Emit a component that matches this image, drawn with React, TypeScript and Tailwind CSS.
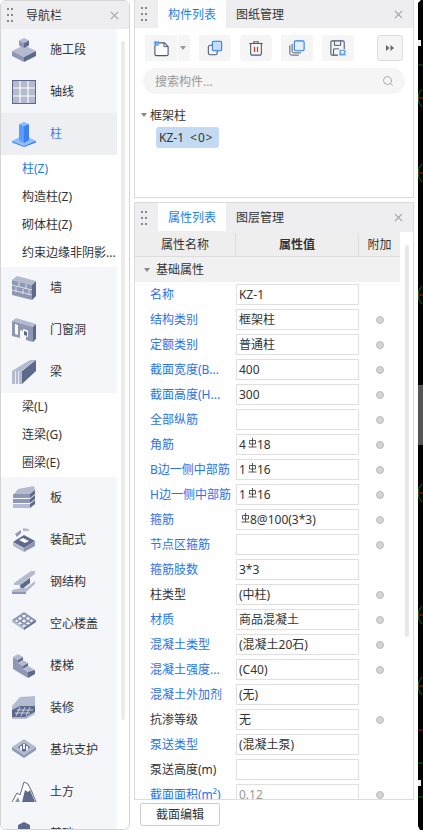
import type { ReactNode } from 'react';
import { Search, X } from 'lucide-react';

const L = '#b4bbcf';
const M = '#8e98b4';
const D = '#5d6a8e';

const icons: Record<string, ReactNode> = {
  stage: (
    <>
      <polygon points="12,7 24,13 12,19 0,13" fill={L} />
      <polygon points="0,13 12,19 12,24 0,18" fill={M} />
      <polygon points="24,13 12,19 12,24 24,18" fill={D} />
      <polygon points="12,0 17,2.5 12,5 7,2.5" fill={L} />
      <polygon points="7,2.5 12,5 12,10 7,7.5" fill={M} />
      <polygon points="17,2.5 12,5 12,10 17,7.5" fill={D} />
    </>
  ),
  axis: (
    <>
      <rect x="0.5" y="0.5" width="23" height="23" fill={L} stroke={D} />
      <path d="M8 1v22M16 1v22M1 8h22M1 16h22" stroke="#fff" strokeWidth="1.2" />
    </>
  ),
  column: (
    <>
      <polygon points="12,13 24,19 12,24 0,19" fill="#8fbcff" />
      <polygon points="0,19 12,24 12,25 0,20.5" fill="#3f86f0" />
      <polygon points="24,19 12,24 12,25 24,20.5" fill="#2f74e0" />
      <polygon points="7,2 12,0 17,2 12,4" fill="#8fbcff" />
      <polygon points="7,2 12,4 12,21 7,18" fill="#5b9dff" />
      <polygon points="17,2 12,4 12,21 17,18" fill="#3b82f0" />
    </>
  ),
  wall: (
    <>
      <polygon points="0,4 5,0 24,5 20,9" fill={L} />
      <polygon points="0,4 20,9 20,24 0,19" fill={M} />
      <polygon points="24,5 20,9 20,24 24,20" fill={D} />
      <path d="M0 9l20 5M0 14l20 5M7 6v5M14 8v5M4 11v5M11 13v5M17 14v5" stroke="#e4e7ef" strokeWidth="0.9" />
    </>
  ),
  door: (
    <>
      <polygon points="0,3 4,0 24,6 21,9" fill={L} />
      <path d="M0 3l21 6v15L14 22V14L8 12v8l-8-2z" fill={M} />
      <polygon points="24,6 21,9 21,24 24,21" fill={D} />
      <polygon points="3,6 6,7 6,17 3,16" fill="#fff" />
      <polygon points="11,11 16,12.5 16,19 11,17.5" fill="#fff" />
      <polygon points="12,13 15,14 15,18 12,17" fill={D} />
    </>
  ),
  beam: (
    <>
      <polygon points="0,11 18,0 24,0 9,11" fill={L} />
      <polygon points="0,11 10,11 10,24 0,24" fill={L} />
      <polygon points="10,11 24,0 24,11 10,24" fill={D} />
      <path d="M3.5 11v13M6.5 11v13" stroke="#fff" strokeWidth="0.7" />
    </>
  ),
  slab: (
    <>
      <polygon points="6,3 22,0 23,4 18,8 2,8" fill={L} />
      <polygon points="1,8 18,8 18,12 1,12" fill={M} />
      <polygon points="1,13 18,13 18,17 1,17" fill={M} />
      <polygon points="1,18 18,18 18,22 1,22" fill={L} />
      <polygon points="18,8 23,4 23,8 18,12" fill={D} />
      <polygon points="18,13 23,9 23,13 18,17" fill={D} />
      <polygon points="18,18 23,14 23,18 18,22" fill={D} />
    </>
  ),
  prefab: (
    <>
      <polygon points="3,6 9,2 9,5 5,9" fill={M} />
      <polygon points="11,0 17,1 17,3 11,3" fill={L} />
      <polygon points="1,14 12,7 23,13 12,20" fill={D} />
      <polygon points="1,14 12,20 12,24 1,18" fill={L} />
      <polygon points="23,13 12,20 12,24 23,18" fill={M} />
      <polygon points="7,12 11,10 17,13 13,15" fill="#fff" />
    </>
  ),
  steel: (
    <>
      <polygon points="8,15 18,8 18,13 9,20" fill={D} />
      <polygon points="2,13 19,1 23,1 23,4 8,15 2,15" fill={L} />
      <polygon points="0,20 9,18 14,18 23,11 23,14 14,22 14,24 0,24" fill={L} />
      <polygon points="0,22 14,22 14,24 0,24" fill={M} />
    </>
  ),
  hollow: (
    <>
      <polygon points="12,0 24,8 12,16 0,8" fill={M} />
      <polygon points="0,8 12,16 12,18 0,10" fill={L} />
      <polygon points="24,8 12,16 12,18 24,10" fill={D} />
      <g fill="#fff">
        <polygon points="12,2.5 14,4 12,5.5 10,4" />
        <polygon points="8,5 10,6.5 8,8 6,6.5" />
        <polygon points="16,5 18,6.5 16,8 14,6.5" />
        <polygon points="4.5,7.5 6.5,9 4.5,10 3,8.5" />
        <polygon points="12,7.5 14,9 12,10.5 10,9" />
        <polygon points="19.5,7.5 21,8.5 19.5,10 17.5,9" />
        <polygon points="8,10 10,11.5 8,12.5 6,11.5" />
        <polygon points="16,10 18,11.5 16,12.5 14,11.5" />
        <polygon points="12,12.5 14,13.5 12,15 10,14" />
      </g>
    </>
  ),
  stair: (
    <>
      <polygon points="1,3 6,6 6,9 11,12 11,15 16,18 16,24 1,15" fill={M} />
      <polygon points="1,3 6,0 11,3 6,6" fill={L} />
      <polygon points="6,6 11,3 11,6 6,9" fill={D} />
      <polygon points="6,9 11,6 16,9 11,12" fill={L} />
      <polygon points="11,12 16,9 16,12 11,15" fill={D} />
      <polygon points="11,15 16,12 23,16 16,18" fill={L} />
      <polygon points="16,18 23,16 23,20 16,24" fill={D} />
    </>
  ),
  finish: (
    <>
      <polygon points="0,10 8,1 23,0 23,13 8,13 0,22" fill={L} />
      <polygon points="0,14 8,10 23,10 23,16 14,21 0,21" fill={D} />
      <polygon points="0,21 14,21 23,16 23,18 14,23 0,23" fill={L} />
      <path d="M5 14h16M3 17h15M8 11l-4 9M13 11l-4 9M18 11l-4 9" stroke="#dfe3ec" strokeWidth="0.8" />
    </>
  ),
  pit: (
    <>
      <polygon points="12,1 24,9 12,17 0,9" fill={L} />
      <polygon points="0,9 12,17 12,20 0,12" fill={M} />
      <polygon points="24,9 12,17 12,20 24,12" fill={M} />
      <polygon points="12,5 18,9 12,14 6,9" fill={D} />
      <path d="M9 8v4M12 6v5M15 8v4" stroke="#eef0f5" strokeWidth="2" />
    </>
  ),
  earth: (
    <>
      <path d="M0 22L5 13L8 15L12 2L16 4L20 12L24 22" fill="#fff" stroke={D} strokeWidth="1" />
      <polygon points="10,22 13,10 16,12 18,10 23,22" fill={D} />
      <polygon points="3,22 6,17 8,22" fill={M} />
    </>
  ),
  base: <polygon points="12,0 18,3 18,8 12,11 6,8 6,3" fill={D} />,
};

function NavIcon({ name }: { name: string }) {
  return (
    <svg width="24" height="24" viewBox="0 0 24 24" className="shrink-0 overflow-visible">
      {icons[name]}
    </svg>
  );
}

function Grip() {
  return (
    <div className="grid w-[6px] grid-cols-2 gap-x-[2px] gap-y-[4px]">
      {[0, 1, 2, 3, 4, 5].map((i) => (
        <span key={i} className="h-[2px] w-[2px] bg-[#888]" />
      ))}
    </div>
  );
}

function NavRow({ icon, label, active }: { icon: string; label: string; active?: boolean }) {
  return (
    <div className={`flex h-[42px] items-center gap-[14px] pl-[11px] ${active ? 'bg-[#eeeff3] text-[#3f7fe6]' : 'text-[#333]'}`}>
      <NavIcon name={icon} />
      <span>{label}</span>
    </div>
  );
}

function SubRow({ label, active }: { label: string; active?: boolean }) {
  return (
    <div className={`flex h-[28px] items-center pl-[21px] ${active ? 'text-[#1a7fe8]' : 'text-[#333]'}`}>
      <span className="truncate">{label}</span>
    </div>
  );
}

function Nav() {
  return (
    <aside className="flex h-[830px] w-[130px] shrink-0 flex-col overflow-hidden rounded-[6px] border border-[#d4d4d4] bg-white">
      <div className="flex h-[28px] shrink-0 items-center bg-[#eeeef0] pl-[6px] pr-[8px] text-[#333]">
        <Grip />
        <span className="ml-[13px] flex-1 pt-[1px]">导航栏</span>
        <X size={13} className="text-[#aaa]" />
      </div>
      <div className="flex">
        <div className="w-[116px] shrink-0 bg-[#f5f6f9]">
          <NavRow icon="stage" label="施工段" />
          <NavRow icon="axis" label="轴线" />
          <NavRow icon="column" label="柱" active />
          <div className="bg-white">
            <SubRow label="柱(Z)" active />
            <SubRow label="构造柱(Z)" />
            <SubRow label="砌体柱(Z)" />
            <SubRow label="约束边缘非阴影..." />
          </div>
          <NavRow icon="wall" label="墙" />
          <NavRow icon="door" label="门窗洞" />
          <NavRow icon="beam" label="梁" />
          <div className="bg-white">
            <SubRow label="梁(L)" />
            <SubRow label="连梁(G)" />
            <SubRow label="圈梁(E)" />
          </div>
          <NavRow icon="slab" label="板" />
          <NavRow icon="prefab" label="装配式" />
          <NavRow icon="steel" label="钢结构" />
          <NavRow icon="hollow" label="空心楼盖" />
          <NavRow icon="stair" label="楼梯" />
          <NavRow icon="finish" label="装修" />
          <NavRow icon="pit" label="基坑支护" />
          <NavRow icon="earth" label="土方" />
          <NavRow icon="base" label="基础" />
        </div>
        <div className="ml-[4px] mt-[12px] h-[679px] w-[4px] rounded-full bg-[#ececec]" />
      </div>
    </aside>
  );
}

function PanelHeader({ active, other, className }: { active: string; other: string; className: string }) {
  return (
    <div className={`flex shrink-0 bg-[#eeeef0] pl-[6px] pr-[8px] ${className}`}>
      <div className="flex w-[17px] items-center">
        <Grip />
      </div>
      <div className="flex h-[28px] w-[68px] items-center justify-center bg-white pt-[1px] text-[#1a7fe8]">{active}</div>
      <div className="flex h-[28px] w-[68px] items-center justify-center pt-[1px] text-[#333]">{other}</div>
      <div className="flex flex-1 items-center justify-end">
        <X size={13} className="text-[#aaa]" />
      </div>
    </div>
  );
}

function ToolButton({ children }: { children: ReactNode }) {
  return <div className="flex h-[26px] w-[32px] items-center justify-center rounded-[3px] bg-[#f5f5f5]">{children}</div>;
}

const stroke = '#4b5670';

function Toolbar() {
  return (
    <div className="flex h-[26px] items-center pl-[10px] pr-[10px]">
      <div className="flex h-[26px] w-[45px] items-center rounded-[3px] bg-[#f5f5f5]">
        <div className="flex h-full w-[33px] items-center justify-center border-r border-[#fff]">
          <svg width="17" height="17" viewBox="0 0 18 18">
            <path d="M6 3h6l4 4v8a1.5 1.5 0 0 1-1.5 1.5h-11A1.5 1.5 0 0 1 2 15V6" fill="#fff" stroke={stroke} strokeWidth="1.2" />
            <path d="M11.5 3v4H16" fill="none" stroke={stroke} strokeWidth="1" />
            <rect x="1" y="1" width="5" height="5" fill="#3f8cf0" />
            <path d="M1 1h1.5v1.5H1zM3.5 3.5H5V5H3.5zM3.5 1H5v1H3.5zM1 3.5h1V5H1z" fill="#cfe2fb" />
          </svg>
        </div>
        <span className="ml-[2px] h-0 w-0 border-x-[3px] border-t-[4px] border-x-transparent border-t-[#999]" />
      </div>
      <div className="ml-[9px]">
        <ToolButton>
          <svg width="16" height="16" viewBox="0 0 18 18">
            <rect x="1.5" y="6" width="10" height="10.5" rx="2" fill="none" stroke={stroke} strokeWidth="1.2" />
            <rect x="6" y="1.5" width="10.5" height="10.5" rx="1.5" fill="#c6dcf8" stroke="#2a7de1" strokeWidth="1.2" />
          </svg>
        </ToolButton>
      </div>
      <div className="ml-[9px]">
        <ToolButton>
          <svg width="16" height="16" viewBox="0 0 18 18">
            <path d="M1.5 4h15M6.5 4V2h5v2M3 4v11.5a1.5 1.5 0 0 0 1.5 1.5h9a1.5 1.5 0 0 0 1.5-1.5V4" fill="none" stroke={stroke} strokeWidth="1.2" />
            <path d="M7.3 7.5v6M10.7 7.5v6" stroke="#e02b2b" strokeWidth="1.3" />
          </svg>
        </ToolButton>
      </div>
      <div className="ml-[9px]">
        <ToolButton>
          <svg width="16" height="16" viewBox="0 0 18 18">
            <path d="M1 6v9a2 2 0 0 0 2 2h8" fill="none" stroke={stroke} strokeWidth="1.1" />
            <path d="M3.5 4.5v8a2 2 0 0 0 2 2h8" fill="none" stroke={stroke} strokeWidth="1.1" />
            <rect x="6" y="1" width="11" height="11" rx="1.5" fill="#e3effd" stroke="#2a7de1" strokeWidth="1.2" />
          </svg>
        </ToolButton>
      </div>
      <div className="ml-[9px]">
        <ToolButton>
          <svg width="16" height="16" viewBox="0 0 18 18">
            <path d="M9 17H2.5A1.5 1.5 0 0 1 1 15.5v-13A1.5 1.5 0 0 1 2.5 1h12A1.5 1.5 0 0 1 16 2.5V10" fill="none" stroke={stroke} strokeWidth="1.2" />
            <path d="M5 1v5h7V1M4 17v-7h6" fill="none" stroke={stroke} strokeWidth="1.1" />
            <rect x="10.5" y="11" width="7" height="6.5" fill="#6aa6f0" />
            <rect x="12.5" y="12.5" width="3" height="2.5" fill="#fff" />
          </svg>
        </ToolButton>
      </div>
      <div className="ml-auto flex h-[26px] w-[26px] items-center justify-center rounded-[3px] border border-[#ddd] bg-[#f5f5f5]">
        <svg width="8" height="6" viewBox="0 0 8 6">
          <path d="M0 0l3.5 3L0 6zM4.5 0L8 3 4.5 6z" fill="#666" />
        </svg>
      </div>
    </div>
  );
}

function ComponentPanel() {
  return (
    <section className="flex h-[198px] shrink-0 flex-col border-x border-b border-[#dcdcdc] bg-white">
      <PanelHeader active="构件列表" other="图纸管理" className="h-[28px]" />
      <div className="pt-[7px]">
        <Toolbar />
      </div>
      <div className="mx-[8px] mt-[7px] flex h-[26px] items-center justify-between rounded-full bg-[#f5f5f5] pl-[12px] pr-[11px] text-[#999]">
        <span className="pt-[1px]">搜索构件...</span>
        <Search size={12} className="text-[#aaa]" />
      </div>
      <div className="mt-[12px] flex h-[18px] items-center pl-[6px] text-[#333]">
        <span className="h-0 w-0 border-x-[3px] border-t-[4px] border-x-transparent border-t-[#888]" />
        <span className="ml-[3px] pt-[1px]">框架柱</span>
      </div>
      <div className="ml-[21px] mt-[3px] flex h-[21px] w-[63px] items-center rounded-[3px] bg-[#c3daf2] pl-[3px] pt-[1px] text-[#333]">
        <span>KZ-1</span>
        <span className="ml-[6px] tracking-[1px]">&lt;0&gt;</span>
      </div>
    </section>
  );
}

function Rebar() {
  return (
    <svg width="9" height="10" viewBox="0 0 9 10" className="mb-[4px] ml-[2px] shrink-0">
      <path d="M4.5 0v9M1.5 2.5h6v3.5h-6zM0.5 9h8" fill="none" stroke="#444" strokeWidth="0.9" />
    </svg>
  );
}

type Prop = { name: string; value: ReactNode; blue?: boolean; dot?: boolean; muted?: boolean };

const props: Prop[] = [
  { name: '名称', value: 'KZ-1', blue: true },
  { name: '结构类别', value: '框架柱', blue: true, dot: true },
  { name: '定额类别', value: '普通柱', blue: true, dot: true },
  { name: '截面宽度(B...', value: '400', blue: true, dot: true },
  { name: '截面高度(H...', value: '300', blue: true, dot: true },
  { name: '全部纵筋', value: '', blue: true, dot: true },
  { name: '角筋', value: <>4<Rebar />18</>, blue: true, dot: true },
  { name: 'B边一侧中部筋', value: <>1<Rebar />16</>, blue: true, dot: true },
  { name: 'H边一侧中部筋', value: <>1<Rebar />16</>, blue: true, dot: true },
  { name: '箍筋', value: <><Rebar />8@100(3*3)</>, blue: true, dot: true },
  { name: '节点区箍筋', value: '', blue: true, dot: true },
  { name: '箍筋肢数', value: '3*3', blue: true },
  { name: '柱类型', value: '(中柱)', dot: true },
  { name: '材质', value: '商品混凝土', blue: true, dot: true },
  { name: '混凝土类型', value: '(混凝土20石)', blue: true, dot: true },
  { name: '混凝土强度...', value: '(C40)', blue: true, dot: true },
  { name: '混凝土外加剂', value: '(无)', blue: true },
  { name: '抗渗等级', value: '无', dot: true },
  { name: '泵送类型', value: '(混凝土泵)', blue: true },
  { name: '泵送高度(m)', value: '' },
  { name: '截面面积(m²)', value: '0.12', blue: true, dot: true, muted: true },
];

function PropRow({ name, value, blue, dot, muted }: Prop) {
  return (
    <div className="flex h-[25px] shrink-0 items-center">
      <div className={`w-[101px] shrink-0 whitespace-nowrap pl-[15px] pt-[1px] ${blue ? 'text-[#2a72ea]' : 'text-[#333]'}`}>{name}</div>
      <div className={`flex h-[21px] w-[123px] shrink-0 items-center whitespace-pre border border-[#e0e0e0] bg-white pl-[2px] pt-[1px] ${muted ? 'text-[#999]' : 'text-[#333]'}`}>
        {value}
      </div>
      <div className="flex flex-1 justify-center">
        {dot && <span className="h-[8px] w-[8px] rounded-full border border-[#bbb] bg-[#d4d4d4]" />}
      </div>
    </div>
  );
}

function PropertyPanel() {
  return (
    <section className="flex h-[598px] shrink-0 flex-col overflow-hidden border border-[#dcdcdc] bg-white">
      <PanelHeader active="属性列表" other="图层管理" className="h-[29px]" />
      <div className="flex min-h-0 flex-1">
        <div className="w-[265px] shrink-0">
          <div className="flex h-[25px] items-center border-b border-[#dcdcdc] bg-[#eeeeee] pt-[2px] text-[#333]">
            <div className="flex h-full w-[101px] items-center justify-center border-r border-[#dcdcdc]">属性名称</div>
            <div className="flex h-full w-[123px] items-center justify-center border-r border-[#dcdcdc] font-bold">属性值</div>
            <div className="flex-1 text-center">附加</div>
          </div>
          <div className="flex h-[25px] items-center bg-[#f1f1f1] pl-[9px] text-[#333]">
            <span className="h-0 w-0 border-x-[3px] border-t-[4px] border-x-transparent border-t-[#888]" />
            <span className="ml-[6px]">基础属性</span>
          </div>
          {props.map((p) => (
            <PropRow key={p.name} {...p} />
          ))}
        </div>
        <div className="ml-[5px] mt-[13px] h-[392px] w-[4px] rounded-full bg-[#e8e8e8]" />
      </div>
    </section>
  );
}

function CadStrip() {
  const red = [98, 173, 295, 493, 615, 686];
  return (
    <div className="h-[830px] w-[5px] shrink-0">
      <svg width="5" height="830" viewBox="0 0 5 830" className="block">
        <path d="M0 3L3 0H5V830H2L0 826z" fill="#000" />
        <rect x="0" y="385" width="5" height="60" fill="#555" />
        <path d="M0 40h3v6H0zM0 780h3v6H0z" fill="#eee" />
        <path d="M0 65h5M0 763h5M0 797h5" stroke="#0d6b0d" />
        <path d="M0 730h5" stroke="#a01010" />
        {red.map((y) => (
          <g key={y}>
            <path d={`M4 ${y - 9}Q0 ${y - 5} 0 ${y}Q0 ${y + 5} 4 ${y + 9}`} fill="none" stroke="#0a7a0a" />
            <path d={`M0 ${y}h5`} stroke="#d01010" />
          </g>
        ))}
      </svg>
    </div>
  );
}

export default function App() {
  return (
    <div className="flex h-[830px] w-[423px] overflow-hidden bg-white font-['Noto_Sans','Noto_Sans_CJK_SC',sans-serif] text-[12px]">
      <Nav />
      <main className="ml-[4px] flex w-[280px] shrink-0 flex-col">
        <ComponentPanel />
        <div className="mt-[4px]">
          <PropertyPanel />
        </div>
        <div className="ml-[6px] mt-[3px] flex h-[23px] w-[80px] items-center justify-center rounded-[3px] border border-[#ccc] pt-[1px] text-[#333]">
          截面编辑
        </div>
      </main>
      <div className="ml-[4px]">
        <CadStrip />
      </div>
    </div>
  );
}
